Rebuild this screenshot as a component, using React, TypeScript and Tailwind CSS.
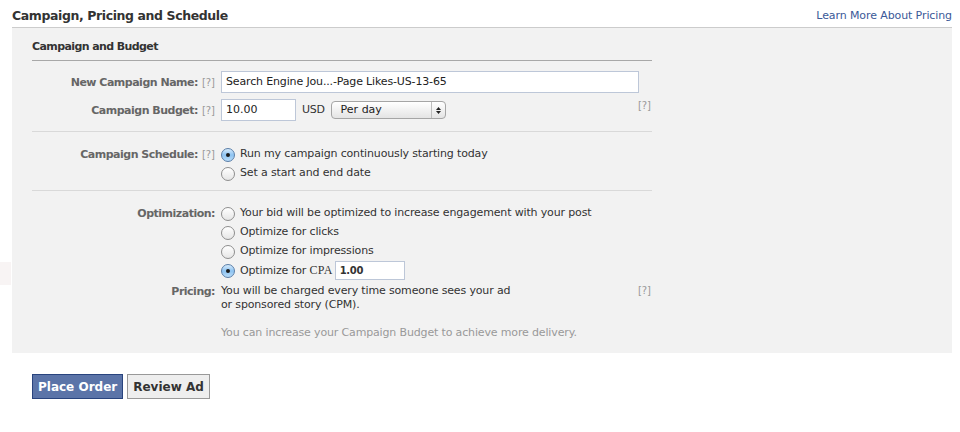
import React from "react";

const F = { fontFamily: '"DejaVu Sans", "Liberation Sans", sans-serif' };

function Help() {
  return <span className="text-[#999] text-[10px] ml-[4px] font-normal tracking-normal">[?]</span>;
}

function Radio({ on }: { on?: boolean }) {
  return on ? (
    <span className="inline-flex items-center justify-center w-[14px] h-[14px] rounded-full border border-[#5a7ea8] bg-gradient-to-b from-[#d6ebfc] via-[#8dc3f1] to-[#b9dcf9] shrink-0">
      <span className="w-[4px] h-[4px] rounded-full bg-[#1a1a1a]" />
    </span>
  ) : (
    <span className="inline-block w-[14px] h-[14px] rounded-full border border-[#8e8e8e] bg-gradient-to-b from-[#ffffff] to-[#e6e6e6] shrink-0" />
  );
}

function Row({ label, help, children, className = "" }: { label: string; help?: boolean; children: React.ReactNode; className?: string }) {
  return (
    <div className={"grid grid-cols-[183px_1fr] gap-x-[6px] " + className}>
      <div className="text-right text-[#666] font-bold text-[11px] leading-[19px] whitespace-nowrap tracking-[-0.5px]">
        {label}
        {help ? <Help /> : null}
      </div>
      <div>{children}</div>
    </div>
  );
}

function RadioLine({ on, children }: { on?: boolean; children: React.ReactNode }) {
  return (
    <div className="flex items-center gap-[5px] h-[19px] text-[11px] text-[#333] tracking-[-0.15px]">
      <Radio on={on} />
      <span className="whitespace-nowrap">{children}</span>
    </div>
  );
}

export default function App() {
  return (
    <div className="w-[960px] h-[432px] bg-white relative" style={F}>
      <div className="absolute left-0 top-[262px] w-[11px] h-[23px] bg-[#f8f4f4]" />
      <div className="pl-[12px] pr-[8px]">
        <div className="flex justify-between items-end h-[28px] border-b border-[#cccccc] pb-[3px]">
          <span className="text-[12.5px] font-bold text-[#333] leading-[16px] tracking-[-0.4px]">Campaign, Pricing and Schedule</span>
          <a className="text-[11px] text-[#3b5998] leading-[14px] mb-[1px] tracking-[-0.1px]">Learn More About Pricing</a>
        </div>
        <div className="bg-[#f2f2f2] h-[325px] pt-[11px] px-[20px]">
          <div className="w-[620px]">
            <div className="text-[11px] font-bold text-[#333] leading-[16px] pb-[5px] border-b border-[#a8a8a8] tracking-[-0.6px]">
              Campaign and Budget
            </div>

            <Row label="New Campaign Name:" help className="mt-[10px] items-center">
              <div className="w-[418px] h-[22px] border border-[#bdc7d8] bg-white text-[11px] text-[#222] leading-[20px] px-[4px] whitespace-nowrap tracking-[-0.15px]">
                Search Engine Jou...-Page Likes-US-13-65
              </div>
            </Row>
            <Row label="Campaign Budget:" help className="mt-[6px] items-center">
              <div className="flex items-center h-[22px]">
                <div className="w-[75px] h-[22px] border border-[#bdc7d8] bg-white text-[11px] text-[#222] leading-[20px] px-[4px]">10.00</div>
                <span className="ml-[6px] text-[11px] text-[#333] tracking-[-0.3px]">USD</span>
                <div className="ml-[6px] w-[115px] h-[18px] rounded-[4px] border border-[#a5a5a5] bg-gradient-to-b from-[#ffffff] to-[#e4e4e4] flex items-center text-[11px] text-[#222]">
                  <span className="flex-1 pl-[9px] leading-[16px]">Per day</span>
                  <span className="w-[14px] h-full border-l border-[#bdbdbd] flex flex-col items-center justify-center gap-[1px]">
                    <svg width="5" height="3" viewBox="0 0 5 3"><path d="M0 3 L2.5 0 L5 3 Z" fill="#222" /></svg>
                    <svg width="5" height="3" viewBox="0 0 5 3"><path d="M0 0 L2.5 3 L5 0 Z" fill="#222" /></svg>
                  </span>
                </div>
                <span className="ml-auto mr-[1px] self-start leading-[14px] text-[#999] text-[10px]">[?]</span>
              </div>
            </Row>

            <div className="mt-[10px] border-b border-[#d9d9d9]" />

            <Row label="Campaign Schedule:" help className="mt-[13px]">
              <RadioLine on>Run my campaign continuously starting today</RadioLine>
              <RadioLine>Set a start and end date</RadioLine>
            </Row>

            <div className="mt-[7px] border-b border-[#d9d9d9]" />

            <Row label="Optimization:" className="mt-[13px]">
              <RadioLine>Your bid will be optimized to increase engagement with your post</RadioLine>
              <RadioLine>Optimize for clicks</RadioLine>
              <RadioLine>Optimize for impressions</RadioLine>
              <div className="flex items-center gap-[5px] h-[19px] text-[11px] text-[#333] tracking-[-0.15px]">
                <Radio on />
                <span className="whitespace-nowrap">
                  Optimize for <span style={{ fontFamily: '"Liberation Serif", serif' }} className="text-[12px] tracking-[0.3px]">CPA</span>
                </span>
                <div className="ml-[-3px] w-[70px] h-[19px] border border-[#bdc7d8] bg-white text-[10px] font-semibold text-[#333] leading-[17px] px-[4px] tracking-[-0.3px]">1.00</div>
              </div>
            </Row>

            <Row label="Pricing:" className="mt-[2px]">
              <div className="flex text-[11px] text-[#333] leading-[14px] pt-[2px] tracking-[-0.15px]">
                <div>
                  You will be charged every time someone sees your ad
                  <br />
                  or sponsored story (CPM).
                </div>
                <span className="ml-auto mr-[1px] text-[#999] text-[10px] tracking-normal">[?]</span>
              </div>
              <div className="mt-[14px] text-[11px] text-[#999] leading-[14px] tracking-[-0.15px]">
                You can increase your Campaign Budget to achieve more delivery.
              </div>
            </Row>
          </div>
        </div>
        <div className="mt-[21px] ml-[20px] flex gap-[4px]">
          <button className="h-[25px] px-[5px] bg-[#5b74a8] border border-[#29447e] text-white text-[12px] font-bold">Place Order</button>
          <button className="h-[25px] px-[5px] bg-[#eeeeee] border border-[#999] text-[#333] text-[12px] font-bold">Review Ad</button>
        </div>
      </div>
    </div>
  );
}
